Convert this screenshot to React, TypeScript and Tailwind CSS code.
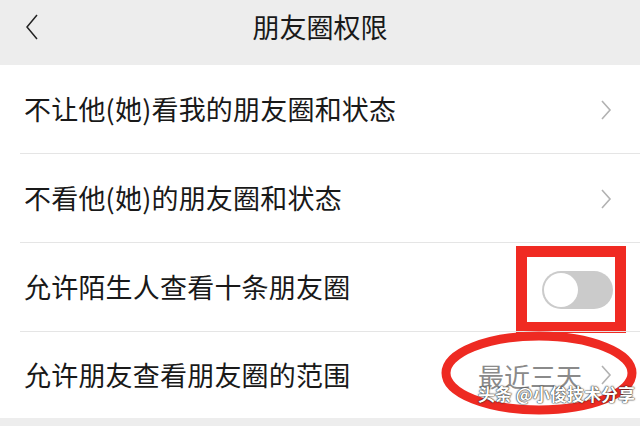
import React from 'react';

const font = { fontFamily: '"Noto Sans CJK SC", "Noto Sans", sans-serif' };

const Chevron = ({ className = '' }: { className?: string }) => (
    <svg viewBox="0 0 12 24" className={className} fill="none" stroke="currentColor" strokeWidth="1.6">
        <path d="M2 3l8 9-8 9" />
    </svg>
);

const Row = ({ label, children, last, tight }: { label: string; children?: React.ReactNode; last?: boolean; tight?: boolean }) => (
    <div className={`relative flex items-center pl-[24px] ${tight ? 'pr-[14px]' : 'pr-[28px]'} ${last ? 'h-[86px]' : 'h-[89px]'}`}>
        <span className="flex-1 text-[27px] tracking-[0.2px] text-[#191919]">{label}</span>
        {children}
        {!last && <div className="absolute bottom-0 left-[20px] right-0 h-px bg-[#e5e5e5]" />}
    </div>
);

export default function App() {
    return (
        <div className="flex h-[426px] w-[640px] flex-col overflow-hidden bg-[#ededed]" style={font}>
            <div className="relative flex h-[65px] shrink-0 items-center justify-center">
                <svg viewBox="0 0 14 26" className="absolute left-[25px] top-[14px] h-[26px] w-[14px] text-[#222]" fill="none" stroke="currentColor" strokeWidth="1.5">
                    <path d="M12 1L2 13l10 12" />
                </svg>
                <span className="-mt-[10px] text-[27px] text-[#191919]">朋友圈权限</span>
            </div>
            <div className="shrink-0 bg-white">
                <Row label="不让他(她)看我的朋友圈和状态">
                    <Chevron className="h-[26px] w-[12px] shrink-0 text-[#b2b2b2]" />
                </Row>
                <Row label="不看他(她)的朋友圈和状态">
                    <Chevron className="h-[26px] w-[12px] shrink-0 text-[#b2b2b2]" />
                </Row>
                <Row label="允许陌生人查看十条朋友圈" tight>
                    <div className="mt-[4px] flex h-[87px] w-[110px] shrink-0 items-center justify-end border-[11px] border-[#f02a22] pr-[2px]">
                        <div className="flex h-[38px] w-[71px] items-center rounded-full bg-[#cbcbcb] p-[2px]">
                            <div className="h-[34px] w-[34px] rounded-full bg-white" />
                        </div>
                    </div>
                </Row>
                <Row label="允许朋友查看朋友圈的范围" last>
                    <div className="relative flex shrink-0 items-center gap-[18px]">
                        <span className="text-[26px] text-[#8a8a8a]">最近三天</span>
                        <Chevron className="h-[26px] w-[12px] text-[#b2b2b2]" />
                        <svg className="absolute -left-[36px] -top-[23px] h-[80px] w-[194px] overflow-visible" viewBox="0 0 194 80">
                            <ellipse cx="97" cy="40" rx="93" ry="37" fill="none" stroke="#ee2a22" strokeWidth="9" />
                        </svg>
                        <span
                            className="absolute left-[0px] top-[28px] whitespace-nowrap text-[17px] font-bold leading-[20px] text-white"
                            style={{ textShadow: '0 0 2px #222, 0 0 1px #000' }}
                        >
                            头条 @小俊技术分享
                        </span>
                    </div>
                </Row>
            </div>
        </div>
    );
}
